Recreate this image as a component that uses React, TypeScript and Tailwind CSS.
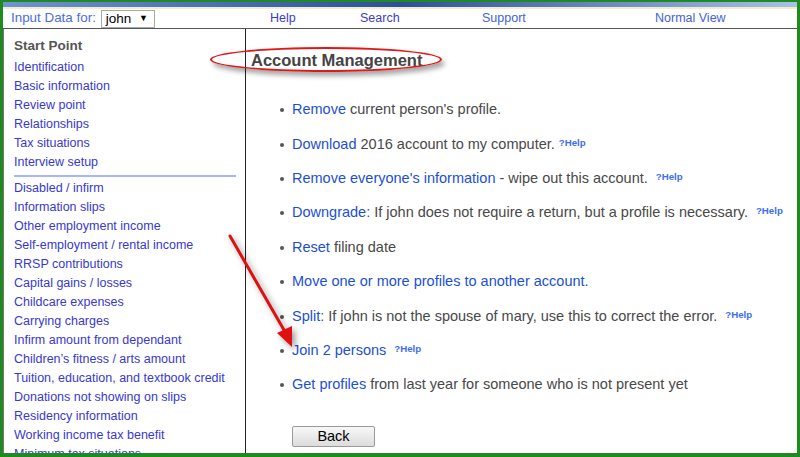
import React from "react";

const group1 = [
  "Identification",
  "Basic information",
  "Review point",
  "Relationships",
  "Tax situations",
  "Interview setup",
];

const group2 = [
  "Disabled / infirm",
  "Information slips",
  "Other employment income",
  "Self-employment / rental income",
  "RRSP contributions",
  "Capital gains / losses",
  "Childcare expenses",
  "Carrying charges",
  "Infirm amount from dependant",
  "Children\u2019s fitness / arts amount",
  "Tuition, education, and textbook credit",
  "Donations not showing on slips",
  "Residency information",
  "Working income tax benefit",
  "Minimum tax situations",
];

function HelpTag({ ml = "ml-[4px]" }: { ml?: string }) {
  return (
    <span className={`${ml} text-[9.7px] font-bold text-[#3d6ef2] relative -top-[3px]`}>?Help</span>
  );
}

function Item({ children }: { children: React.ReactNode }) {
  return (
    <li className="h-[34.4px] flex items-center whitespace-nowrap">
      <span className="w-[4px] h-[4px] rounded-full bg-[#555] mr-[8px] shrink-0" />
      <span>{children}</span>
    </li>
  );
}

function L({ children }: { children: React.ReactNode }) {
  return <span className="text-[#1c4fd6]">{children}</span>;
}

export default function App() {
  return (
    <div className="relative w-[800px] h-[457px] overflow-hidden bg-white border-[#1f8a1f] border-l-[3px] border-r-[3px] border-t-[2px] border-b-[4px] flex flex-col font-['Liberation_Sans',Arial,sans-serif]">
      {/* top stripes */}
      <div className="h-[5px] bg-gradient-to-r from-[#6f93d3] via-[#2f4f9a] to-[#a9c0e8] shrink-0" />
      <div className="h-[2px] bg-[#f4eec4] shrink-0" />

      {/* header */}
      <div className="h-[20px] flex items-center border-b border-[#555] shrink-0 text-[12.5px]">
        <div className="w-[267px] flex items-center pl-[8px]">
          <span className="text-[13.4px] text-[#4a6ee0]">Input Data for:</span>
          <div className="ml-[5px] w-[54px] h-[18px] border border-[#a8a8a8] flex items-center pl-[4px] pr-[6px] justify-between">
            <span className="text-[13.5px] text-black leading-none">john</span>
            <span className="text-[9px] text-black leading-none">▼</span>
          </div>
        </div>
        <div className="w-[90px] text-[#3b3bcc]">Help</div>
        <div className="w-[122px] text-[#3b3bcc]">Search</div>
        <div className="w-[173px] text-[#4363d8]">Support</div>
        <div className="text-[#4363d8]">Normal View</div>
      </div>

      {/* body */}
      <div className="flex flex-1 min-h-0">
        <div className="w-[243px] shrink-0 border-l border-l-[#777] border-r border-r-[#222] pl-[10px] pt-[7px] text-[12.5px] text-[#3838d2] overflow-hidden">
          <div className="leading-[20px] font-bold text-[13.5px] text-[#555]">Start Point</div>
          <div className="mt-[2px]">
            {group1.map((t) => (
              <div key={t} className="leading-[19px] whitespace-nowrap">{t}</div>
            ))}
          </div>
          <div className="mt-[3px] h-[1.5px] w-[222px] bg-[#a9b6ff]" />
          <div className="mt-[2px]">
            {group2.map((t) => (
              <div key={t} className="leading-[19px] whitespace-nowrap">{t}</div>
            ))}
          </div>
        </div>

        <div className="flex-1 pl-[5px] pt-[21px] text-[14.5px] text-[#484848]">
          <h2 className="leading-[20px] text-[16.5px] font-bold text-[#444]">Account Management</h2>
          <ul className="mt-[23px] ml-[29px]">
            <Item>
              <L>Remove</L> current person's profile.
            </Item>
            <Item>
              <L>Download</L> 2016 account to my computer.
              <HelpTag />
            </Item>
            <Item>
              <L>Remove everyone's information</L> - wipe out this account.
              <HelpTag ml="ml-[8px]" />
            </Item>
            <Item>
              <L>Downgrade:</L> If john does not require a return, but a profile is necessary.
              <HelpTag ml="ml-[8px]" />
            </Item>
            <Item>
              <L>Reset</L> filing date
            </Item>
            <Item>
              <L>Move one or more profiles to another account.</L>
            </Item>
            <Item>
              <L>Split:</L> If john is not the spouse of mary, use this to correct the error.
              <HelpTag ml="ml-[8px]" />
            </Item>
            <Item>
              <L>Join 2 persons</L>
              <HelpTag ml="ml-[8px]" />
            </Item>
            <Item>
              <L>Get profiles</L> from last year for someone who is not present yet
            </Item>
          </ul>
          <button className="mt-[23px] ml-[41px] w-[83px] h-[21px] border border-[#9a9a9a] rounded-[2px] bg-gradient-to-b from-[#f8f8f8] to-[#dcdcdc] text-[14.5px] text-black leading-none">
            Back
          </button>
        </div>
      </div>

      {/* annotation ellipse */}
      <div className="absolute left-[207px] top-[45px] w-[232px] h-[25px] rounded-[50%] border-2 border-[#e01818] shadow-[3px_4px_5px_rgba(0,0,0,0.35)]" />

      {/* annotation arrow */}
      <svg className="absolute left-0 top-0 pointer-events-none" width="800" height="457" style={{ filter: "drop-shadow(3px 3px 3px rgba(0,0,0,0.4))" }}>
        <line x1="227" y1="234" x2="281" y2="328" stroke="#e01010" strokeWidth="3" strokeLinecap="round" />
        <polygon points="289,345 274,331 289,324" fill="#e01010" />
      </svg>
    </div>
  );
}
